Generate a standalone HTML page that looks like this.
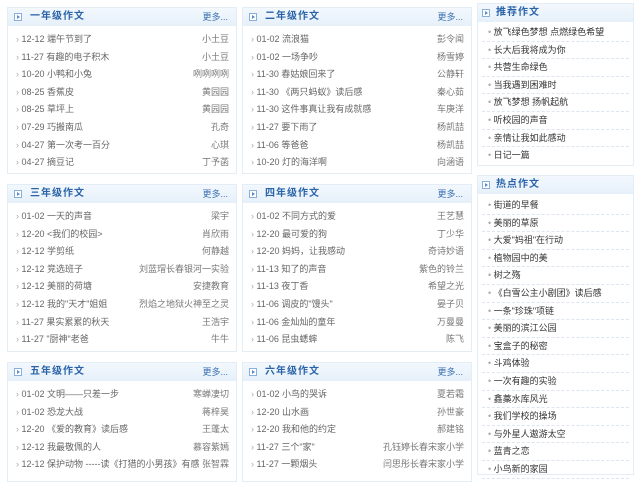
<!DOCTYPE html><html><head><meta charset="utf-8"><style>
*{margin:0;padding:0;box-sizing:border-box}
body{width:640px;height:468px;overflow:hidden;background:#fff;font-family:"Liberation Sans","Noto Sans CJK SC",sans-serif;font-size:9px;color:#666}
.p{position:absolute;border:1px solid #e3edf6;background:#fff}
.h{height:18px;background:linear-gradient(#f2f8fd,#e6f0fa);position:relative;line-height:18px;padding-left:22px;color:#2a63a8;font-weight:bold;font-size:10px;letter-spacing:1px}
.h i{position:absolute;left:6px;top:5px;width:8px;height:8px;border:1px solid #8ab0da;background:#fff}
.h i:after{content:"";position:absolute;left:2px;top:1px;border-left:3px solid #5a8cc8;border-top:2px solid transparent;border-bottom:2px solid transparent}
.h b{position:absolute;right:8px;top:0;font-weight:normal;font-size:9px;color:#3a6fb0;letter-spacing:0}
.r{height:17.6px;line-height:17.6px;padding:0 7px 0 8px;display:flex;justify-content:space-between;white-space:nowrap;overflow:hidden}
.r span:first-child:before{content:"› ";color:#aaa}
.r span+span{color:#777}
.l{padding-top:5px}
.s .r{border-bottom:1px dashed #dde6ee;padding-left:6px;color:#333;margin:0 4px}
.s .r span:before{content:"• ";color:#aaa}
</style></head><body>

<div class="p" style="left:7px;top:7px;width:230px;height:167px"><div class="h"><i></i>一年级作文<b>更多...</b></div><div class="l">
<div class="r"><span>12-12 端午节到了</span><span>小土豆</span></div>
<div class="r"><span>11-27 有趣的电子积木</span><span>小土豆</span></div>
<div class="r"><span>10-20 小鸭和小兔</span><span>咧咧咧咧</span></div>
<div class="r"><span>08-25 香蕉皮</span><span>黄园园</span></div>
<div class="r"><span>08-25 草坪上</span><span>黄园园</span></div>
<div class="r"><span>07-29 巧搬南瓜</span><span>孔奇</span></div>
<div class="r"><span>04-27 第一次考一百分</span><span>心琪</span></div>
<div class="r"><span>04-27 摘豆记</span><span>丁予菡</span></div></div></div>

<div class="p" style="left:242px;top:7px;width:230px;height:167px"><div class="h"><i></i>二年级作文<b>更多...</b></div><div class="l">
<div class="r"><span>01-02 流浪猫</span><span>彭令闻</span></div>
<div class="r"><span>01-02 一场争吵</span><span>杨雪婷</span></div>
<div class="r"><span>11-30 春姑娘回来了</span><span>公静轩</span></div>
<div class="r"><span>11-30 《两只蚂蚁》读后感</span><span>秦心茹</span></div>
<div class="r"><span>11-30 这件事真让我有成就感</span><span>车庚洋</span></div>
<div class="r"><span>11-27 要下雨了</span><span>杨凯喆</span></div>
<div class="r"><span>11-06 等爸爸</span><span>杨凯喆</span></div>
<div class="r"><span>10-20 灯的海洋啊</span><span>向涵语</span></div></div></div>

<div class="p" style="left:7px;top:184px;width:230px;height:168px"><div class="h"><i></i>三年级作文<b>更多...</b></div><div class="l">
<div class="r"><span>01-02 一天的声音</span><span>梁宇</span></div>
<div class="r"><span>12-20 &lt;我们的校园&gt;</span><span>肖欣雨</span></div>
<div class="r"><span>12-12 学剪纸</span><span>何静越</span></div>
<div class="r"><span>12-12 竞选班子</span><span>刘蓝瑁长春银河一实验</span></div>
<div class="r"><span>12-12 美丽的荷塘</span><span>安捷教育</span></div>
<div class="r"><span>12-12 我的"天才"姐姐</span><span>烈焰之地狱火神至之灵</span></div>
<div class="r"><span>11-27 果实累累的秋天</span><span>王浩宇</span></div>
<div class="r"><span>11-27 "厨神"老爸</span><span>牛牛</span></div></div></div>

<div class="p" style="left:242px;top:184px;width:230px;height:168px"><div class="h"><i></i>四年级作文<b>更多...</b></div><div class="l">
<div class="r"><span>01-02 不同方式的爱</span><span>王艺慧</span></div>
<div class="r"><span>12-20 最可爱的狗</span><span>丁少华</span></div>
<div class="r"><span>12-20 妈妈，让我感动</span><span>奇诗妙语</span></div>
<div class="r"><span>11-13 知了的声音</span><span>紫色的铃兰</span></div>
<div class="r"><span>11-13 夜丁香</span><span>希望之光</span></div>
<div class="r"><span>11-06 调皮的"馒头"</span><span>晏子贝</span></div>
<div class="r"><span>11-06 金灿灿的童年</span><span>万曼曼</span></div>
<div class="r"><span>11-06 昆虫蟋蟀</span><span>陈飞</span></div></div></div>

<div class="p" style="left:7px;top:362px;width:230px;height:120px"><div class="h"><i></i>五年级作文<b>更多...</b></div><div class="l">
<div class="r"><span>01-02 文明——只差一步</span><span>寒蝉凄切</span></div>
<div class="r"><span>01-02 恐龙大战</span><span>蒋梓昊</span></div>
<div class="r"><span>12-20 《爱的教育》读后感</span><span>王蓬太</span></div>
<div class="r"><span>12-12 我最敬佩的人</span><span>慕容紫嫣</span></div>
<div class="r"><span>12-12 保护动物 -----读《打猎的小男孩》有感</span><span>张智霖</span></div></div></div>

<div class="p" style="left:242px;top:362px;width:230px;height:120px"><div class="h"><i></i>六年级作文<b>更多...</b></div><div class="l">
<div class="r"><span>01-02 小鸟的哭诉</span><span>夏若霜</span></div>
<div class="r"><span>12-20 山水画</span><span>孙世豪</span></div>
<div class="r"><span>12-20 我和他的约定</span><span>郝建铭</span></div>
<div class="r"><span>11-27 三个"家"</span><span>孔钰婷长春宋家小学</span></div>
<div class="r"><span>11-27 一颗烟头</span><span>闫思彤长春宋家小学</span></div></div></div>

<div class="p s" style="left:477px;top:3px;width:157px;height:163px"><div class="h" style="padding-left:18px"><i style="left:4px"></i>推荐作文</div><div style="padding-top:2px">
<div class="r"><span>放飞绿色梦想 点燃绿色希望</span></div>
<div class="r"><span>长大后我将成为你</span></div>
<div class="r"><span>共营生命绿色</span></div>
<div class="r"><span>当我遇到困难时</span></div>
<div class="r"><span>放飞梦想 扬帆起航</span></div>
<div class="r"><span>听校园的声音</span></div>
<div class="r"><span>亲情让我如此感动</span></div>
<div class="r" style="border:0"><span>日记一篇</span></div></div></div>

<div class="p s" style="left:477px;top:175px;width:157px;height:300px"><div class="h" style="padding-left:18px"><i style="left:4px"></i>热点作文</div><div style="padding-top:3px">
<div class="r"><span>街道的早餐</span></div>
<div class="r"><span>美丽的草原</span></div>
<div class="r"><span>大爱"妈祖"在行动</span></div>
<div class="r"><span>植物园中的美</span></div>
<div class="r"><span>树之殇</span></div>
<div class="r"><span>《白雪公主小剧团》读后感</span></div>
<div class="r"><span>一条"珍珠"项链</span></div>
<div class="r"><span>美丽的滨江公园</span></div>
<div class="r"><span>宝盒子的秘密</span></div>
<div class="r"><span>斗鸡体验</span></div>
<div class="r"><span>一次有趣的实验</span></div>
<div class="r"><span>鑫藁水库风光</span></div>
<div class="r"><span>我们学校的操场</span></div>
<div class="r"><span>与外星人遨游太空</span></div>
<div class="r"><span>蓝青之恋</span></div>
<div class="r"><span>小鸟新的家园</span></div></div></div>
</body></html>
